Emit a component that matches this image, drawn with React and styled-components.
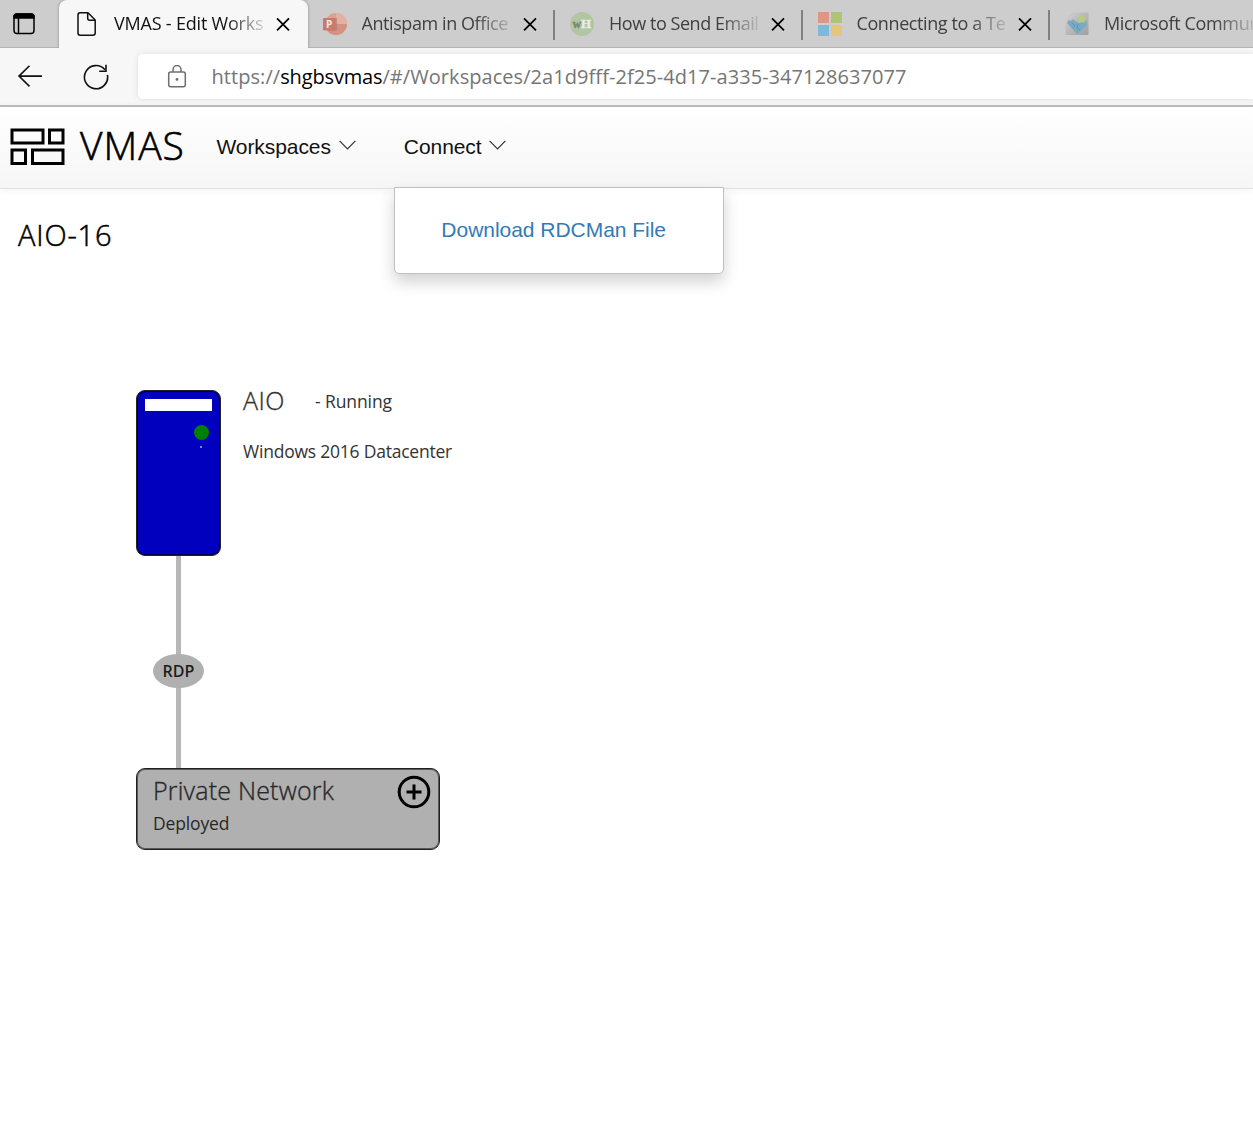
import React from "react";
import styled, { createGlobalStyle } from "styled-components";

const GlobalStyle = createGlobalStyle`
  * { box-sizing: border-box; }
  body { margin: 0; background: #fff; }
`;

const ui = `"Open Sans", "Noto Sans", sans-serif`;
const arial = `"Liberation Sans", Arial, sans-serif`;

const Page = styled.div`
  width: 100%;
  height: 1133px;
  overflow: hidden;
  display: flex;
  flex-direction: column;
  font-family: ${ui};
  color: #000;
  background: #fff;
`;

const TabStrip = styled.div`
  flex: none;
  display: flex;
  height: 48px;
  background: #cdcdcd;
  box-shadow: inset 0 -1px 0 #b5b5b5;
  overflow: hidden;
`;

const TabActions = styled.div`
  flex: none;
  width: 59px;
  padding: 12px 0 0 12px;
`;

const Tab = styled.div`
  flex: none;
  width: ${(p) => (p.$active ? 249 : 247.5)}px;
  margin-right: ${(p) => (p.$active ? -1.5 : 0)}px;
  height: 48px;
  display: flex;
  align-items: center;
  padding: 0 ${(p) => (p.$active ? 18 : 17)}px 0 16px;
  background: ${(p) => (p.$active ? "#f7f7f7" : "transparent")};
  border-radius: ${(p) => (p.$active ? "8px 8px 0 0" : 0)};
  box-shadow: ${(p) => (p.$active ? "0 0 3px rgba(0,0,0,.35)" : "none")};
`;

const Divider = styled.div`
  flex: none;
  width: 2px;
  height: 30px;
  margin: 10px -1px 0 -1px;
  background: #808080;
`;

const TabIcon = styled.div`
  flex: none;
  width: 24px;
  height: 24px;
  margin-right: 15px;
  svg { display: block; }
`;

const TabTitle = styled.div`
  width: 151px;
  flex: none;
  overflow: hidden;
  white-space: nowrap;
  font-size: 18px;
  line-height: 28px;
  margin-top: -2px;
  letter-spacing: ${(p) => p.$spacing}px;
  color: ${(p) => (p.$active ? "#111" : "#404040")};
  mask-image: linear-gradient(to right, #000 112px, transparent 156px);
`;

const CloseButton = styled.button`
  flex: none;
  width: 14px;
  height: 14px;
  margin-left: auto;
  padding: 0;
  border: 0;
  background: none;
  svg { display: block; }
`;

const Toolbar = styled.div`
  flex: none;
  display: flex;
  align-items: flex-start;
  height: 59px;
  padding: 6px 0 0 17px;
  background: #f7f7f7;
  border-bottom: 2px solid #bdbdbd;
`;

const ToolButton = styled.button`
  flex: none;
  width: 26px;
  height: 45px;
  margin-right: ${(p) => p.$gap}px;
  padding: 0;
  border: 0;
  background: none;
  display: flex;
  align-items: center;
  justify-content: center;
`;

const AddressBar = styled.div`
  flex: 1;
  height: 45px;
  display: flex;
  align-items: center;
  padding-left: 29px;
  background: #fff;
  border-radius: 5px 0 0 5px;
  box-shadow: 0 0 6px rgba(0, 0, 0, 0.1);
`;

const Url = styled.div`
  margin-left: 24.500px;
  font-size: 20px;
  line-height: 45px;
  letter-spacing: 0.06px;
  white-space: nowrap;
  color: #757575;
`;

const Host = styled.span`
  color: #000;
  letter-spacing: -0.150px;
`;

const Header = styled.header`
  flex: none;
  position: relative;
  z-index: 1;
  display: flex;
  align-items: center;
  height: 82px;
  padding: 0 0 2px 10px;
  background: linear-gradient(#fff, #f6f6f6);
  border-bottom: 1px solid #e2e2e2;
  box-shadow: 0 1px 8px rgba(0, 0, 0, 0.06);
`;

const Brand = styled.div`
  width: 105px;
  margin: -3px 31.5px 0 14px;
  font-size: 39px;
  font-weight: 300;
  -webkit-text-stroke: 0.6px #000;
  line-height: 60px;
  letter-spacing: 1px;
  white-space: nowrap;
`;

const NavItem = styled.div`
  position: relative;
  display: flex;
  align-items: center;
  height: 81px;
  margin-right: 48px;
  gap: ${(p) => p.$gap}px;
  font: 21px/24px ${arial};
  letter-spacing: -0.08px;
  color: #111;
`;

const Menu = styled.div`
  position: absolute;
  left: -9.5px;
  top: 81px;
  width: 330px;
  height: 87px;
  padding: 30px 46px;
  background: #fff;
  border: 1px solid #c0c0c0;
  border-radius: 0 0 5px 5px;
  box-shadow: 0 8px 16px rgba(0, 0, 0, 0.18);
`;

const MenuLink = styled.a`
  display: block;
  white-space: nowrap;
  letter-spacing: -0.03px;
  color: #337ab7;
`;

const Title = styled.h1`
  flex: none;
  margin: 0;
  padding: 26px 0 1px 18px;
  font-weight: 300;
  -webkit-text-stroke: 0.5px #000;
  font-size: 29px;
  line-height: 40px;
  letter-spacing: 0.85px;
`;

const Canvas = styled.main`
  position: relative;
  flex: 1;
`;

const Server = styled.div`
  position: absolute;
  left: 136px;
  top: 134px;
  width: 85px;
  height: 166px;
  padding: 8px 8px 0;
  display: flex;
  flex-direction: column;
  align-items: flex-end;
  background: #0000be;
  border: 1px solid #222;
  border-radius: 9px;
  box-shadow: inset 0 0 0 1px rgba(0, 0, 0, 0.65);
`;

const DriveSlot = styled.div`
  width: 67px;
  height: 12px;
  background: #fff;
`;

const PowerLight = styled.div`
  width: 15px;
  height: 15px;
  margin: 14px 3.5px 6px 0;
  border-radius: 50%;
  background: #008000;
`;

const Speck = styled.div`
  width: 2px;
  height: 2px;
  margin-right: 10px;
  background: #8080df;
`;

const Link = styled.div`
  position: absolute;
  left: 176px;
  top: 300px;
  width: 5px;
  height: 213px;
  background: #b7b7b7;
`;

const Protocol = styled.div`
  position: absolute;
  left: 153px;
  top: 398px;
  width: 51px;
  height: 34px;
  border-radius: 50%;
  background: #b0b0b0;
  text-align: center;
  font-size: 16px;
  font-weight: 600;
  line-height: 34px;
  letter-spacing: 0;
  color: #1c1c1c;
`;

const ServerInfo = styled.div`
  position: absolute;
  left: 243px;
  top: 126px;
  color: #333;
`;

const InfoRow = styled.div`
  display: flex;
  align-items: center;
  height: 36px;
`;

const Name = styled.div`
  width: ${(p) => p.$width}px;
  font-size: 25px;
  font-weight: 300;
  -webkit-text-stroke: 0.35px currentColor;
  line-height: 36px;
  letter-spacing: ${(p) => p.$spacing}px;
  white-space: nowrap;
`;

const Small = styled.div`
  font-size: 17.5px;
  line-height: 26px;
  letter-spacing: ${(p) => p.$spacing}px;
  margin-top: ${(p) => p.$top || 0}px;
  white-space: nowrap;
`;

const Network = styled.div`
  position: absolute;
  left: 136px;
  top: 512px;
  width: 304px;
  height: 82px;
  display: flex;
  justify-content: space-between;
  padding: 3px 8px 0 16px;
  background: #b0b0b0;
  border: 1px solid #222;
  border-radius: 9px;
  box-shadow: inset 0 0 0 1px rgba(0, 0, 0, 0.5);
  color: #282828;
`;

const AddButton = styled.button`
  width: 34px;
  height: 34px;
  margin-top: 3px;
  padding: 0;
  border: 0;
  background: none;
  svg { display: block; }
`;

const CloseIcon = () => (
  <svg width="14" height="14" viewBox="0 0 14 14" fill="none" stroke="#000" strokeWidth="1.8">
    <path d="M1 1.3 13 13.3M13 1.3 1 13.3" />
  </svg>
);

const PaneIcon = () => (
  <svg width="24" height="24" viewBox="0 0 24 24" fill="none" stroke="#000" strokeWidth="1.5">
    <rect x="2" y="2" width="20" height="19.5" rx="3" />
    <path d="M2 6V5a3 3 0 0 1 3-3h14a3 3 0 0 1 3 3v1z" fill="#000" />
    <path d="M6.500 6v15.500" />
  </svg>
);

const FileIcon = () => (
  <svg width="24" height="24" viewBox="0 0 24 24" fill="none" stroke="#111" strokeWidth="1.5" strokeLinejoin="round">
    <path d="M5 .8h8l7.200 7.200v13a2.200 2.200 0 0 1-2.200 2.200H5.200A2.200 2.200 0 0 1 3 21V3A2.200 2.200 0 0 1 5 .8z" />
    <path d="M12.700 1v5.300A2 2 0 0 0 14.700 8.300H20" />
  </svg>
);

const SlidesIcon = () => (
  <svg width="24" height="24" viewBox="0 0 24 24">
    <circle cx="13" cy="12" r="11" fill="#dda091" />
    <path d="M13 1a11 11 0 0 1 11 11H13z" fill="#e2b1a5" />
    <path d="M2 12h22a11 11 0 0 1-22 0z" fill="#d59182" />
    <path d="M6 6h8v13H5z" fill="#b87d70" opacity=".65" />
    <rect x="0" y="6" width="12.500" height="12.500" rx="1" fill="#c87b6b" />
    <text x="3" y="15.800" fontFamily="Open Sans" fontWeight="700" fontSize="10" fill="#ededed">P</text>
  </svg>
);

const HowIcon = () => (
  <svg width="24" height="24" viewBox="0 0 24 24">
    <circle cx="12" cy="12" r="12" fill="#b3c6a4" />
    <text x="2.500" y="15.800" fontFamily="Liberation Serif" fontWeight="700" fontSize="12" fill="#76846f" stroke="#76846f" strokeWidth=".3">w</text>
    <text x="11" y="15.800" fontFamily="Liberation Serif" fontWeight="700" fontSize="13" fill="#e9ece6" stroke="#e9ece6" strokeWidth=".4">H</text>
  </svg>
);

const WindowsIcon = () => (
  <svg width="24" height="24" viewBox="0 0 24 24">
    <path d="M0 0h11v11H0z" fill="#de9882" />
    <path d="M13 0h11v11H13z" fill="#aec578" />
    <path d="M0 13h11v11H0z" fill="#7cbad8" />
    <path d="M13 13h11v11H13z" fill="#e1c67c" />
  </svg>
);

const PuzzleIcon = () => (
  <svg width="24" height="24" viewBox="0 0 24 24">
    <defs>
      <linearGradient id="tile" x1="0" y1="0" x2="1" y2="1">
        <stop offset="0" stopColor="#d2d2d2" />
        <stop offset="1" stopColor="#9f9f9f" />
      </linearGradient>
    </defs>
    <rect x=".5" y=".5" width="23" height="22.500" rx="1" fill="url(#tile)" />
    <path d="M2 11l2-3 2 1 2-2 2 2 2 1 2 1 3-1 4-1 1 4-9.500 9.500z" fill="#78a9c5" />
    <path d="M11 6l3 1 1-4 2 1 4 1-2 4 1 2-4-1-2 1-1-3z" fill="#b9cb81" />
    <path d="M7 11l3 3-2 2m5-4-1 4 3 2" fill="none" stroke="#628da8" strokeWidth=".8" />
  </svg>
);

const BackIcon = () => (
  <svg width="26" height="24" viewBox="0 0 26 24" fill="none" stroke="#111" strokeWidth="1.600">
    <path d="M12.500 .800 2 11.100l10.500 10.300M2 11.100h23" />
  </svg>
);

const ReloadIcon = () => (
  <svg width="26" height="26" viewBox="0 0 26 26" fill="none" stroke="#111" strokeWidth="1.600">
    <path d="M24.400 10.800A11.600 11.600 0 1 1 22 5.800" />
    <path d="M23 .800v6.500h-6.800" />
  </svg>
);

const LockIcon = () => (
  <svg width="20" height="24" viewBox="0 0 20 24" fill="none" stroke="#6d6d6d" strokeWidth="1.500">
    <rect x="1.700" y="7" width="16.600" height="14.800" rx="2" />
    <path d="M6 7V4.500a4 4 0 0 1 8 0V7" />
    <circle cx="10" cy="14.400" r="1.400" fill="#6d6d6d" stroke="none" />
  </svg>
);

const Logo = () => (
  <svg width="56" height="38" viewBox="0 0 56 38" fill="none" stroke="#000" strokeWidth="3">
    <path d="M2 2h31v13H2zM39.500 2H53v13H39.500zM2 22h13.500v13.500H2zM22.500 22H53v13.500H22.500z" />
  </svg>
);

const ChevronSvg = styled.svg`
  flex: none;
  margin-top: -3px;
`;

const Chevron = () => (
  <ChevronSvg width="17" height="10" viewBox="0 0 17 10" fill="none" stroke="#333" strokeWidth="1.200">
    <path d="M.6.8 8.500 8.800 16.400.8" />
  </ChevronSvg>
);

const PlusIcon = () => (
  <svg width="34" height="34" viewBox="0 0 34 34" fill="none" stroke="#000" strokeWidth="3">
    <circle cx="17" cy="17" r="14.800" />
    <path d="M17 9.500v15M9.500 17h15" />
  </svg>
);

const tabs = [
  { title: "VMAS - Edit Works", icon: <FileIcon />, spacing: -0.2, active: true },
  { title: "Antispam in Office", icon: <SlidesIcon />, spacing: -0.42 },
  { title: "How to Send Email", icon: <HowIcon />, spacing: -0.45 },
  { title: "Connecting to a Te", icon: <WindowsIcon />, spacing: -0.4 },
  { title: "Microsoft Commun", icon: <PuzzleIcon />, spacing: -0.35 },
];

export default function App() {
  return (
    <Page>
      <GlobalStyle />
      <TabStrip>
        <TabActions><PaneIcon /></TabActions>
        {tabs.map((tab, i) => (
          <React.Fragment key={tab.title}>
            {i > 1 && <Divider />}
            <Tab $active={tab.active}>
              <TabIcon>{tab.icon}</TabIcon>
              <TabTitle $active={tab.active} $spacing={tab.spacing}>{tab.title}</TabTitle>
              <CloseButton aria-label="Close"><CloseIcon /></CloseButton>
            </Tab>
          </React.Fragment>
        ))}
      </TabStrip>
      <Toolbar>
        <ToolButton $gap={40} aria-label="Back"><BackIcon /></ToolButton>
        <ToolButton $gap={29} aria-label="Reload"><ReloadIcon /></ToolButton>
        <AddressBar>
          <LockIcon />
          <Url>https://<Host>shgbsvmas</Host>/#/Workspaces/2a1d9fff-2f25-4d17-a335-347128637077</Url>
        </AddressBar>
      </Toolbar>
      <Header>
        <Logo />
        <Brand>VMAS</Brand>
        <NavItem $gap={8}>Workspaces<Chevron /></NavItem>
        <NavItem $gap={7}>
          Connect<Chevron />
          <Menu><MenuLink>Download RDCMan File</MenuLink></Menu>
        </NavItem>
      </Header>
      <Title>AIO-16</Title>
      <Canvas>
        <Link />
        <Server>
          <DriveSlot />
          <PowerLight />
          <Speck />
        </Server>
        <ServerInfo>
          <InfoRow>
            <Name $width={72} $spacing={0.5}>AIO</Name>
            <Small $spacing={-0.1} $top={1}>- Running</Small>
          </InfoRow>
          <Small $spacing={-0.22} $top={20}>Windows 2016 Datacenter</Small>
        </ServerInfo>
        <Protocol>RDP</Protocol>
        <Network>
          <div>
            <Name $spacing={0.2}>Private Network</Name>
            <Small $spacing={-0.15} $top={2}>Deployed</Small>
          </div>
          <AddButton aria-label="Add"><PlusIcon /></AddButton>
        </Network>
      </Canvas>
    </Page>
  );
}
